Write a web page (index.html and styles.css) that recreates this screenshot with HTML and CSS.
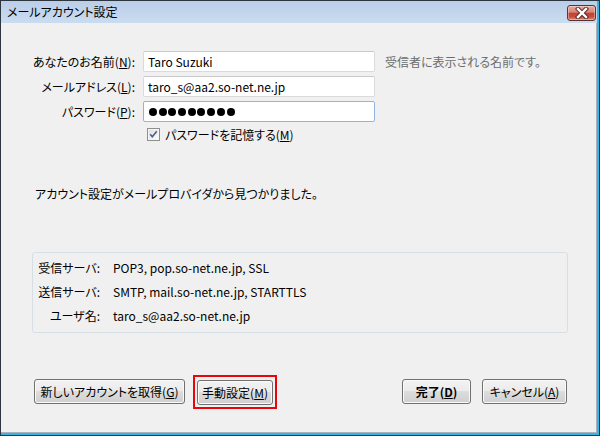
FILE: index.html
```html
<!DOCTYPE html>
<html lang="ja">
<head>
<meta charset="utf-8">
<title>メールアカウント設定</title>
<link rel="stylesheet" href="styles.css">
</head>
<body>
<div class="window">
  <div class="frame">
    <div class="titlebar">
      <span class="title">メールアカウント設定</span>
      <span class="close">
        <svg width="14" height="12" viewBox="0 0 14 12">
          <path d="M3 2 L11 10 M11 2 L3 10" stroke="#5a2a2a" stroke-width="4.4" stroke-linecap="square" fill="none"/>
          <path d="M3 2 L11 10 M11 2 L3 10" stroke="#ffffff" stroke-width="2.4" stroke-linecap="square" fill="none"/>
        </svg>
      </span>
    </div>
    <div class="client">
      <div class="form">
        <span class="lbl">あなたのお名前(<u>N</u>):</span>
        <div class="field">Taro Suzuki</div>
        <span class="hint">受信者に表示される名前です。</span>

        <span class="lbl">メールアドレス(<u>L</u>):</span>
        <div class="field">taro_s@aa2.so-net.ne.jp</div>
        <span></span>

        <span class="lbl">パスワード(<u>P</u>):</span>
        <div class="field focused">
          <span class="dots"><i></i><i></i><i></i><i></i><i></i><i></i><i></i><i></i><i></i></span>
        </div>
        <span></span>

        <div class="remember">
          <span class="checkbox">
            <svg width="11" height="11" viewBox="0 0 11 11">
              <path d="M2.2 5.2 L4.3 7.8 L8.8 2.3" stroke="#4a5d8f" stroke-width="1.6" fill="none"/>
            </svg>
          </span>
          <span>パスワードを記憶する(<u>M</u>)</span>
        </div>
      </div>

      <p class="message">アカウント設定がメールプロバイダから見つかりました。</p>

      <div class="info">
        <div class="info-row"><span class="info-lbl">受信サーバ:</span><span>POP3, pop.so-net.ne.jp, SSL</span></div>
        <div class="info-row"><span class="info-lbl">送信サーバ:</span><span>SMTP, mail.so-net.ne.jp, STARTTLS</span></div>
        <div class="info-row"><span class="info-lbl">ユーザ名:</span><span>taro_s@aa2.so-net.ne.jp</span></div>
      </div>

      <div class="buttons">
        <button class="btn btn-new">新しいアカウントを取得(<u>G</u>)</button>
        <span class="mark"><button class="btn btn-manual">手動設定(<u>M</u>)</button></span>
        <button class="btn btn-done">完了(<u>D</u>)</button>
        <button class="btn btn-cancel">キャンセル(<u>A</u>)</button>
      </div>
    </div>
  </div>
</div>
</body>
</html>
```

FILE: styles.css
```css
* { box-sizing: border-box; }
html, body { margin: 0; padding: 0; }
body {
  width: 600px;
  height: 436px;
  overflow: hidden;
  background: #ffffff;
  color: #000;
  font-family: "Noto Sans CJK JP", "Noto Sans", sans-serif;
  font-size: 12px;
  font-feature-settings: "palt";
}
u { text-decoration: underline; text-underline-offset: 1px; }

.window {
  width: 600px;
  height: 436px;
  border: 1px solid #2c3640;
  display: flex;
}
.frame {
  flex: 1;
  display: flex;
  flex-direction: column;
  border-right: 2px solid #36b5e2;
  border-bottom: 2px solid #36b5e2;
  min-width: 0;
}

/* title bar */
.titlebar {
  height: 22px;
  flex: none;
  display: flex;
  align-items: flex-start;
  background: linear-gradient(#bacee8, #cadcf0);
}
.title {
  margin: 3px 0 0 6px;
  line-height: 16px;
}
.close {
  margin: 4px 1px 0 auto;
  width: 29px;
  height: 16px;
  border: 1px solid #5e3232;
  border-radius: 3px;
  background: linear-gradient(#e6ac9f 0%, #d98474 45%, #c2432f 50%, #c44c39 75%, #dd8a70 100%);
  box-shadow: inset 0 0 0 1px rgba(255, 255, 255, 0.35);
  display: flex;
  align-items: center;
  justify-content: center;
}
.close svg { display: block; }

/* client area */
.client {
  flex: 1;
  background: #f0f0f0;
  border-right: 1px solid #a9b3bd;
  border-bottom: 1px solid #a9b3bd;
  display: flex;
  flex-direction: column;
}

.form {
  margin-top: 28px;
  display: grid;
  grid-template-columns: 134px 232px auto;
  grid-template-rows: 21px 21px 21px 17px;
  column-gap: 8px;
  row-gap: 4px;
  align-items: center;
}
.lbl {
  text-align: right;
  white-space: nowrap;
  line-height: 21px;
}
.field {
  height: 21px;
  background: #ffffff;
  border: 1px solid #dadada;
  border-top-color: #cacaca;
  border-radius: 2px;
  padding: 0 4px;
  line-height: 19px;
  white-space: nowrap;
  display: flex;
  align-items: center;
}
.field.focused { border-color: #8db6df; }
.dots { display: flex; gap: 1.7px; margin-left: 1px; }
.dots i {
  display: block;
  width: 8px;
  height: 8px;
  border-radius: 50%;
  background: #000;
}
.hint {
  margin-left: 2px;
  color: #6d6d6d;
  white-space: nowrap;
}
.remember {
  grid-column: 2 / 4;
  height: 17px;
  display: flex;
  align-items: center;
  padding-left: 4px;
  white-space: nowrap;
}
.checkbox {
  width: 13px;
  height: 13px;
  margin-right: 5px;
  border: 1px solid #8e8f8f;
  background: linear-gradient(135deg, #dcdcdc, #ffffff);
  box-shadow: inset 0 0 0 1px #f4f4f4;
  display: flex;
  align-items: center;
  justify-content: center;
}
.checkbox svg { display: block; }

.message {
  margin: 42px 0 0 34px;
  line-height: 18px;
}

.info {
  margin: 49px 0 0 31px;
  width: 536px;
  height: 81px;
  border: 1px solid #d6dee6;
  border-radius: 3px;
  padding-top: 2px;
}
.info-row {
  height: 24px;
  display: flex;
  align-items: center;
  white-space: nowrap;
}
.info-lbl {
  width: 67px;
  margin-right: 13px;
  text-align: right;
}

.buttons {
  margin: 46px 29px 0 33px;
  height: 25px;
  display: flex;
  align-items: center;
}
.btn {
  font: inherit;
  font-feature-settings: "palt";
  color: #000;
  height: 25px;
  padding: 0;
  border: 1px solid #707070;
  border-radius: 3px;
  background: linear-gradient(#f2f2f2 0%, #ebebeb 49%, #dddddd 50%, #cfcfcf 100%);
  box-shadow: inset 0 0 0 1px #fafafa;
  line-height: 21px;
  white-space: nowrap;
  display: block;
}
.btn-new { width: 151px; }
.mark {
  margin-left: 8px;
  padding: 3px 2px 2px 2px;
  border: 2px solid #e8060a;
  display: block;
}
.btn-manual { width: 76px; }
.btn-done {
  width: 69px;
  margin-left: auto;
  font-weight: bold;
}
.btn-cancel {
  width: 85px;
  margin-left: 11px;
}
```
